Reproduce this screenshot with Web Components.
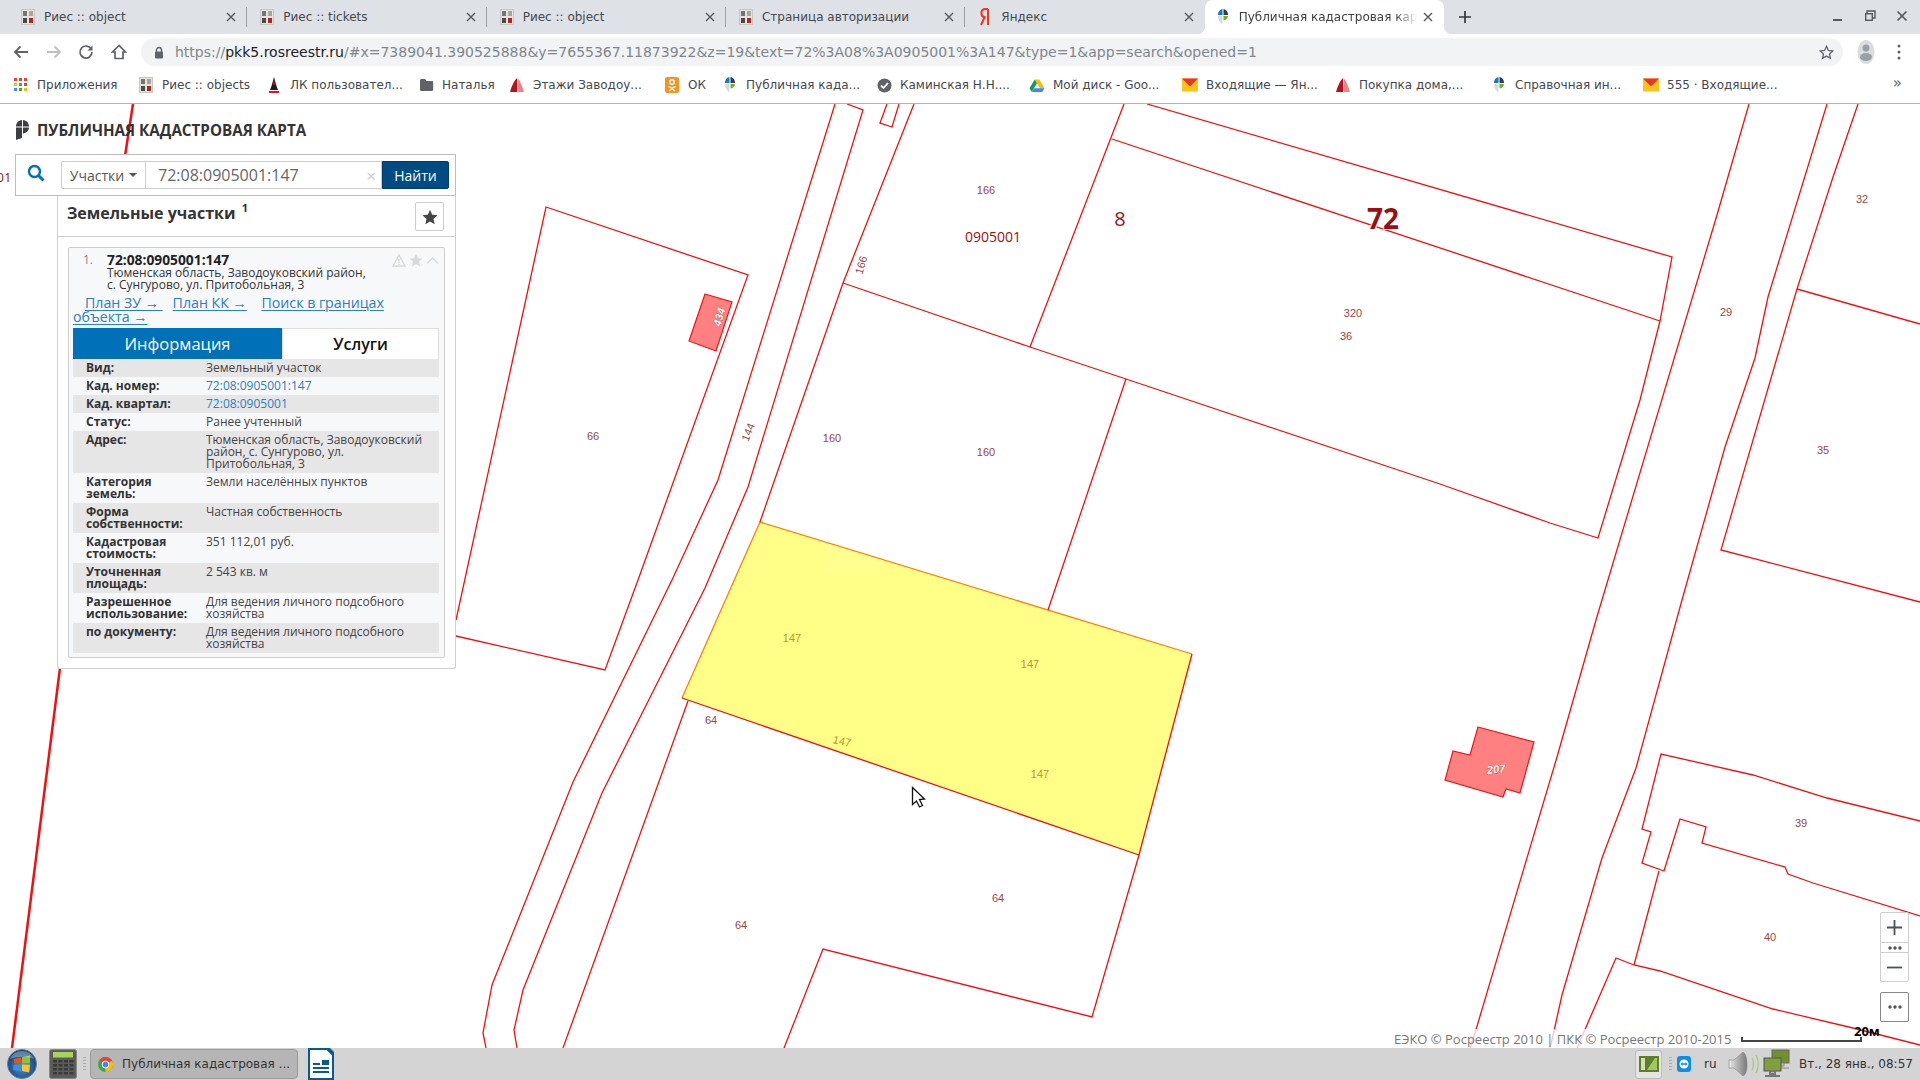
<!DOCTYPE html>
<html lang="ru">
<head>
<meta charset="utf-8">
<title>Публичная кадастровая карта</title>
<style>
    html, body { margin: 0; height: 100%; overflow: hidden; background: #fff; }
</style>
</head>
<body>
<pkk-desktop>
    <browser-tabs></browser-tabs>
    <browser-toolbar url="https://pkk5.rosreestr.ru/#x=7389041.390525888&amp;y=7655367.11873922&amp;z=19&amp;text=72%3A08%3A0905001%3A147&amp;type=1&amp;app=search&amp;opened=1"></browser-toolbar>
    <bookmark-bar></bookmark-bar>
    <map-view>
        <cadastre-canvas></cadastre-canvas>
        <pkk-sidebar></pkk-sidebar>
        <map-controls></map-controls>
        <map-footer></map-footer>
    </map-view>
    <desktop-taskbar></desktop-taskbar>
</pkk-desktop>

<script>
const ICONS = {
    riess: `<svg width="14" height="16" viewBox="0 0 14 16"><rect x="0.5" y="0.5" width="13" height="15" fill="#e6e3dc" stroke="#c9c6bf"/><rect x="2" y="2" width="4" height="5" fill="#77736e"/><rect x="8" y="2" width="4" height="5" fill="#a8a5a0"/><rect x="2" y="9" width="4" height="5" fill="#4a4a4a"/><rect x="8" y="9" width="4" height="5" fill="#a52a25"/></svg>`,
    yandex: `<svg width="14" height="18" viewBox="0 0 14 18"><path d="M10 1v16M10 1H7.5C4.8 1 3.4 2.8 3.4 5.2c0 2.300 1.300 3.700 3.300 4.100L3 17" fill="none" stroke="#f2341c" stroke-width="2"/></svg>`,
    pkk: `<svg width="12" height="18" viewBox="0 0 12 18"><path d="M5.500 1C2.500 1.500 1 4 1 7h4.500z" fill="#1a75bc"/><path d="M6.500 1C9.500 1.500 11 4 11 7H6.500z" fill="#2d3e50"/><path d="M6.500 8H11C10.800 10.500 9 12 6.500 12.500z" fill="#6ab42d"/><path d="M1 8h4.500v8C3 15 1 12 1 8z" fill="#d5dadd"/></svg>`,
    apps: `<svg width="14" height="14" viewBox="0 0 14 14"><g><rect x="0" y="0" width="3" height="3" fill="#ea4335"/><rect x="5" y="0" width="3" height="3" fill="#ea4335"/><rect x="10" y="0" width="3" height="3" fill="#ea4335"/><rect x="0" y="5" width="3" height="3" fill="#fbbc04"/><rect x="5" y="5" width="3" height="3" fill="#34a853"/><rect x="10" y="5" width="3" height="3" fill="#ea4335"/><rect x="0" y="10" width="3" height="3" fill="#4285f4"/><rect x="5" y="10" width="3" height="3" fill="#34a853"/><rect x="10" y="10" width="3" height="3" fill="#fbbc04"/></g></svg>`,
    lk: `<svg width="14" height="18" viewBox="0 0 14 18"><path d="M7 1l2.500 9 1.500 4H3l1.500-4z" fill="#1c1c1c"/><path d="M7 2l1 7H6z" fill="#c8141c"/><path d="M2 16h10" stroke="#d4181f" stroke-width="2"/></svg>`,
    folder: `<svg width="15" height="14" viewBox="0 0 15 14"><path d="M1 2.500C1 1.700 1.500 1 2.300 1H6l1.500 2h5.500c.8 0 1.200.6 1.200 1.300v7.500c0 .7-.5 1.200-1.200 1.200H2.300C1.500 13 1 12.500 1 11.800z" fill="#5f6368"/></svg>`,
    sail: `<svg width="16" height="16" viewBox="0 0 16 16"><path d="M8 1C5 4 2.500 9 1 15h7z" fill="#b5121b"/><path d="M8.500 1C11 4 13.500 9 15 15H8.500z" fill="#e5868b"/></svg>`,
    ok: `<svg width="16" height="18" viewBox="0 0 16 18"><rect x="1" y="1" width="14" height="16" rx="2" fill="#f7931e"/><circle cx="8" cy="6" r="2.300" fill="none" stroke="#fff" stroke-width="1.400"/><path d="M4.500 10.500c2 1.300 5 1.300 7 0M8 11.500v1.200M5.200 15L8 12.500l2.800 2.500" fill="none" stroke="#fff" stroke-width="1.400"/></svg>`,
    check: `<svg width="15" height="15" viewBox="0 0 15 15"><circle cx="7.500" cy="7.500" r="7" fill="#5f6368"/><path d="M4 7.500l2.500 2.500L11 5" fill="none" stroke="#fff" stroke-width="1.800"/></svg>`,
    drive: `<svg width="17" height="15" viewBox="0 0 17 15"><path d="M6 1h5l5.500 9.500H11.500z" fill="#fbbc04"/><path d="M6 1L.5 10.500 3 14.500 8.500 5z" fill="#0f9d58"/><path d="M3 14.500h11l2.500-4H5.500z" fill="#4285f4"/></svg>`,
    mail: `<svg width="16" height="14" viewBox="0 0 16 14"><rect x="0" y="0.500" width="16" height="13" fill="#fcc419"/><path d="M0 .5h16L8 8.500z" fill="#e8352a"/></svg>`,
    close: `<svg width="10" height="10" viewBox="0 0 10 10"><path d="M1 1l8 8M9 1l-8 8" stroke="#55585c" stroke-width="1.400"/></svg>`
};

class BrowserTab extends HTMLElement {
    constructor() {
        super();
        this.attachShadow({mode: 'open'});
        this.shadowRoot.innerHTML = `
            <style>
                :host {
                    display: flex;
                    align-items: center;
                    width: 239.33px;
                    height: 34px;
                    box-sizing: border-box;
                    padding: 0 0 1px 12px;
                    position: relative;
                    font: 12px "DejaVu Sans", sans-serif;
                    color: #45484d;
                }
                .ic { width: 16px; display: flex; justify-content: center; flex: none; }
                .tx {
                    margin-left: 8px;
                    flex: 1;
                    white-space: nowrap;
                    overflow: hidden;
                }
                .x { flex: none; width: 10px; margin: 0 11px 0 6px; display: flex; }
                :host(:not([active]):not([nosep]))::after {
                    content: '';
                    position: absolute;
                    right: 0;
                    top: 7px;
                    height: 20px;
                    width: 1px;
                    background: #9da1a6;
                }
                :host([active]) {
                    background: #fff;
                    border-radius: 8px 8px 0 0;
                    color: #3c4043;
                    padding-left: 10px;
                }
                :host([active])::before, :host([active])::after {
                    content: '';
                    position: absolute;
                    bottom: 0;
                    width: 8px;
                    height: 8px;
                }
                :host([active])::before {
                    left: -8px;
                    background: radial-gradient(circle at 0 0, transparent 8px, #fff 8.500px);
                }
                :host([active])::after {
                    right: -8px;
                    background: radial-gradient(circle at 100% 0, transparent 8px, #fff 8.500px);
                }
                :host([active]) .tx {
                    -webkit-mask-image: linear-gradient(90deg, #000 88%, transparent);
                }
            </style>
            <span class="ic">${ICONS[this.getAttribute('icon')]}</span>
            <span class="tx"><slot></slot></span>
            <span class="x">${ICONS.close}</span>
        `;
    }
}
customElements.define('browser-tab', BrowserTab);

class BrowserTabs extends HTMLElement {
    constructor() {
        super();
        this.attachShadow({mode: 'open'});
        this.shadowRoot.innerHTML = `
            <style>
                :host {
                    display: flex;
                    align-items: stretch;
                    height: 34px;
                    background: #dee1e6;
                    padding-left: 8px;
                }
                .plus { margin: 9px 0 0 13px; width: 16px; height: 16px; }
                .win { margin-left: auto; display: flex; align-items: center; gap: 20px; padding: 0 12px 2px 0; }
            </style>
            <browser-tab icon="riess">Риес :: object</browser-tab>
            <browser-tab icon="riess">Риес :: tickets</browser-tab>
            <browser-tab icon="riess">Риес :: object</browser-tab>
            <browser-tab icon="riess">Страница авторизации</browser-tab>
            <browser-tab icon="yandex" nosep>Яндекс</browser-tab>
            <browser-tab icon="pkk" active>Публичная кадастровая карта</browser-tab>
            <svg class="plus" viewBox="0 0 16 16"><path d="M8 2v12M2 8h12" stroke="#35383c" stroke-width="1.700"/></svg>
            <span class="win">
                <svg width="12" height="12" viewBox="0 0 12 12"><path d="M1 10h9" stroke="#55585c" stroke-width="2"/></svg>
                <svg width="12" height="12" viewBox="0 0 12 12"><path d="M3 3V1h8v7H9" fill="none" stroke="#55585c" stroke-width="1.400"/><rect x="1.700" y="3.700" width="6.600" height="6.600" fill="none" stroke="#55585c" stroke-width="1.400"/></svg>
                <svg width="12" height="12" viewBox="0 0 12 12"><path d="M1.500 1.500l9 9M10.500 1.500l-9 9" stroke="#55585c" stroke-width="1.700"/></svg>
            </span>
        `;
    }
}
customElements.define('browser-tabs', BrowserTabs);

class BrowserToolbar extends HTMLElement {
    constructor() {
        super();
        this.attachShadow({mode: 'open'});
        const url = this.getAttribute('url');
        const host = 'pkk5.rosreestr.ru';
        const rest = url.slice(url.indexOf(host) + host.length);
        this.shadowRoot.innerHTML = `
            <style>
                :host {
                    display: flex;
                    align-items: center;
                    height: 30px;
                    padding: 3px 0 0 5px;
                    background: #fff;
                    font: 14px "DejaVu Sans", sans-serif;
                }
                .btn { width: 32.500px; display: flex; justify-content: center; align-items: center; }
                .url {
                    width: 1702px;
                    height: 28px;
                    margin: 0 0 0 6px;
                    background: #f1f3f4;
                    border-radius: 14px;
                    display: flex;
                    align-items: center;
                    box-sizing: border-box;
                    padding: 0 9px 0 13px;
                    color: #80868b;
                }
                .url b { font-weight: 400; color: #202124; }
                .txt { margin-left: 11px; flex: 1; white-space: nowrap; }
                .side { display: flex; align-items: center; margin-left: 14px; gap: 22px; }
            </style>
            <span class="btn"><svg width="16" height="14" viewBox="0 0 16 14"><path d="M15 7H2M7.500 1.500L2 7l5.500 5.500" fill="none" stroke="#5f6368" stroke-width="1.800"/></svg></span>
            <span class="btn"><svg width="16" height="14" viewBox="0 0 16 14"><path d="M1 7h13M8.500 1.500L14 7l-5.500 5.500" fill="none" stroke="#bdc0c4" stroke-width="1.800"/></svg></span>
            <span class="btn"><svg width="16" height="16" viewBox="0 0 16 16"><path d="M13.300 5.200A6 6 0 1 0 14 8" fill="none" stroke="#5f6368" stroke-width="1.700"/><path d="M14.500 1.500v5h-5z" fill="#5f6368"/></svg></span>
            <span class="btn"><svg width="16" height="16" viewBox="0 0 16 16"><path d="M8 1.500L1.500 8H4v6.500h8V8h2.500z" fill="none" stroke="#5f6368" stroke-width="1.700"/></svg></span>
            <span class="url">
                <svg width="10" height="13" viewBox="0 0 10 13"><path d="M2.500 6V4a2.500 2.500 0 0 1 5 0v2" fill="none" stroke="#5f6368" stroke-width="1.400"/><rect x="1" y="5.500" width="8" height="7" rx="1" fill="#5f6368"/></svg>
                <span class="txt">https://<b>${host}</b>${rest}</span>
                <svg width="15" height="15" viewBox="0 0 15 15"><path d="M7.500 1.300l1.900 4.100 4.400.5-3.300 3 .9 4.400-3.900-2.200-3.900 2.200.9-4.400-3.300-3 4.400-.5z" fill="none" stroke="#5f6368" stroke-width="1.300"/></svg>
            </span>
            <span class="side">
                <svg width="18" height="24" viewBox="0 0 18 24"><ellipse cx="9" cy="12" rx="8.500" ry="12" fill="#dadce0"/><circle cx="9" cy="8" r="3.500" fill="#9aa0a6"/><ellipse cx="9" cy="17" rx="6" ry="4" fill="#9aa0a6"/></svg>
                <svg width="4" height="16" viewBox="0 0 4 16"><circle cx="2" cy="2" r="1.500" fill="#5f6368"/><circle cx="2" cy="8" r="1.500" fill="#5f6368"/><circle cx="2" cy="14" r="1.500" fill="#5f6368"/></svg>
            </span>
        `;
    }
}
customElements.define('browser-toolbar', BrowserToolbar);

class BookmarkItem extends HTMLElement {
    constructor() {
        super();
        this.attachShadow({mode: 'open'});
        this.shadowRoot.innerHTML = `
            <style>
                :host {
                    display: flex;
                    align-items: center;
                    flex: none;
                    font: 12px "DejaVu Sans", sans-serif;
                    color: #45484d;
                    white-space: nowrap;
                    box-sizing: border-box;
                }
                .ic { width: 16px; margin-right: 8px; display: flex; justify-content: center; flex: none; }
            </style>
            <span class="ic">${ICONS[this.getAttribute('icon')]}</span><slot></slot>
        `;
        this.style.width = this.getAttribute('w') + 'px';
    }
}
customElements.define('bookmark-item', BookmarkItem);

class BookmarkBar extends HTMLElement {
    constructor() {
        super();
        this.attachShadow({mode: 'open'});
        const items = [
            ['apps', 125, 'Приложения'], ['riess', 128, 'Риес :: objects'], ['lk', 152, 'ЛК пользовател...'],
            ['folder', 91, 'Наталья'], ['sail', 155, 'Этажи Заводоу...'], ['ok', 58, 'ОК'],
            ['pkk', 154, 'Публичная када...'], ['check', 153, 'Каминская Н.Н....'], ['drive', 153, 'Мой диск - Goo...'],
            ['mail', 153, 'Входящие — Ян...'], ['sail', 156, 'Покупка дома,...'], ['pkk', 152, 'Справочная ин...'],
            ['mail', 240, '555 · Входящие...']
        ];
        this.shadowRoot.innerHTML = `
            <style>
                :host {
                    display: flex;
                    height: 36px;
                    background: #fff;
                    padding-left: 13px;
                    border-bottom: 1px solid #b4b4b4;
                    position: relative;
                }
                .more {
                    position: absolute;
                    right: 18px;
                    top: 7px;
                    font: 15px "DejaVu Sans", sans-serif;
                    color: #5f6368;
                }
            </style>
            ${items.map(i => `<bookmark-item icon="${i[0]}" w="${i[1]}">${i[2]}</bookmark-item>`).join('')}
            <span class="more">»</span>
        `;
    }
}
customElements.define('bookmark-bar', BookmarkBar);

class MapView extends HTMLElement {
    constructor() {
        super();
        this.attachShadow({mode: 'open'});
        this.shadowRoot.innerHTML = `
            <style>
                :host {
                    display: block;
                    position: relative;
                    height: 944px;
                    background: #fff;
                    overflow: hidden;
                }
            </style>
            <slot></slot>
        `;
    }
}
customElements.define('map-view', MapView);

class CadastreCanvas extends HTMLElement {
    constructor() {
        super();
        this.attachShadow({mode: 'open'});
        const lines = [
            // parcel 66
            '456,620 546,207 748,275 638,580 605,670 456,636',
            // road strip by 144
            '835,104 718,480 672,580 573,782 492,985 483,1033 486,1048',
            '847,104 863,110 748,487 705,588 602,793 523,990 514,1030 517,1048',
            '914,104 843,283 760,522',
            '899,104 892,127 880,123 887,104',
            '688,701 563,1048',
            // 160 / 166 / 320
            '843,283 1030,347 1126,379 1440,484 1550,523 1598,538 1640,400 1660,321 1672,257 1147,104',
            '1112,139 1660,321',
            '1124,104 1030,347',
            '1126,379 1048,610',
            // 64
            '1139,855 1092,1017 823,949 784,1048',
            // road 29
            '1749,104 1717,215 1596,620 1557,757 1475,1033 1470,1048',
            '1827,104 1768,297 1755,358 1725,447 1682,600 1636,768 1602,858 1562,995 1552,1040 1550,1048',
            '1858,104 1833,177 1797,289 1721,550 1920,602',
            '1797,289 1920,324',
            // 39 / 40
            '1920,821 1827,798 1753,775 1661,754 1642,829 1651,832 1642,863 1664,871 1680,819 1706,827 1702,843 1785,867 1788,874 1813,883 1920,916',
            '1659,871 1634,965',
            '1577,1048 1616,958 1634,965 1660,971 1773,1009 1853,1028 1920,1045'
        ];
        const labels = [
            [593, 436, '66'], [832, 438, '160'], [986, 190, '166'], [986, 452, '160'], [1353, 313, '320'], [1346, 336, '36'],
            [1862, 199, '32'], [1726, 312, '29'], [1823, 450, '35'], [711, 720, '64'], [741, 925, '64'], [998, 898, '64'],
            [1801, 823, '39'], [1770, 937, '40']
        ];
        const yellow = [[792, 638], [1030, 664], [1040, 774]];
        this.shadowRoot.innerHTML = `
            <style>
                :host { position: absolute; inset: 0; display: block; }
                svg { display: block; }
                polyline { fill: none; stroke: #f01010; stroke-width: 1.300; }
                text { font: 11px "Liberation Sans", sans-serif; fill: #9a4448; text-anchor: middle; dominant-baseline: central; }
                text.y { fill: #c8932e; }
                text.big { font: 14px "Open Sans", sans-serif; fill: #9a1010; }
                text.house { font: italic 700 11px "Liberation Sans", sans-serif; fill: #fff; stroke: #a03030; stroke-width: .6px; paint-order: stroke; }
            </style>
            <svg width="1920" height="944" viewBox="0 104 1920 944">
                <polygon points="760,522 1192,654 1139,855 682,698" fill="#ffff88"/>
                <rect x="825" y="522" width="55" height="51" fill="#fff" opacity=".07"/>
                <path d="M682,698 L760,522 L1192,654" fill="none" stroke="#ff7f10" stroke-width="1.300"/>
                <path d="M1192,654 L1139,855 L682,698" fill="none" stroke="#f01010" stroke-width="1.300"/>
                ${lines.map(l => `<polyline points="${l}"/>`).join('')}
                <path d="M60,668 L12,1048" stroke="#f01010" stroke-width="2.500"/>
                <path d="M133,104 L125,156" stroke="#f01010" stroke-width="2.500"/>
                <polygon points="705,294 732,302 716,351 689,341" fill="#ff8080" stroke="#e81818" stroke-width="1.200"/>
                <polygon points="1478,727 1534,742 1520,793 1506,789 1503,797 1445,780 1453,751 1470,755" fill="#ff8080" stroke="#e81818" stroke-width="1.200"/>
                ${labels.map(l => `<text x="${l[0]}" y="${l[1]}">${l[2]}</text>`).join('')}
                ${yellow.map(l => `<text class="y" x="${l[0]}" y="${l[1]}">147</text>`).join('')}
                <text class="y" transform="translate(842 741) rotate(12)">147</text>
                <text transform="translate(748 432) rotate(-68)">144</text>
                <text transform="translate(861 265) rotate(-74)">166</text>
                <text class="house" transform="translate(719 317) rotate(-75)">434</text>
                <text class="house" transform="translate(1496 769) rotate(-6)">207</text>
                <text class="big" x="993" y="236">0905001</text>
                <text x="1120" y="218" style="font: 20px 'Open Sans', sans-serif; fill: #9a1010">8</text>
                <text x="1383" y="218" style="font: 700 28px 'Open Sans', sans-serif; fill: #9a1010; stroke: #fff; stroke-width: 2px; paint-order: stroke">72</text>
                <text x="4" y="177" style="font: 13px 'Open Sans', sans-serif; fill: #9a1010">01</text>
                <path d="M912.500,787.500 L912.500,804.500 L916.500,801 L919.500,807 L922.500,805.500 L919.500,799.500 L924.500,799 Z" fill="#fff" stroke="#111" stroke-width="1.300"/>
            </svg>
        `;
    }
}
customElements.define('cadastre-canvas', CadastreCanvas);

class PkkSidebar extends HTMLElement {
    constructor() {
        super();
        this.attachShadow({mode: 'open'});
        this.shadowRoot.innerHTML = `
            <style>
                :host {
                    display: block;
                    position: absolute;
                    left: 15px;
                    top: 15px;
                    width: 441px;
                    font-family: "Open Sans", sans-serif;
                }
                .title {
                    display: flex;
                    align-items: center;
                    height: 24px;
                    margin: -1px 0 12px 1px;
                    gap: 8px;
                    font-size: 15.200px;
                    font-weight: 700;
                    color: #333;
                    white-space: nowrap;
                }
            </style>
            <div class="title">
                <svg width="13" height="20" viewBox="0 0 13 20"><path d="M6 0C2.500 .3 0 3 0 6.500h6zM7 0c3.500.3 6 3 6 6.500H7zM7 7.500h6c0 3-2.500 5.500-6 6zM0 7.500h6V18l-6 2z" fill="#3b3f44"/></svg>
                ПУБЛИЧНАЯ КАДАСТРОВАЯ КАРТА
            </div>
            <search-bar></search-bar>
            <result-panel></result-panel>
        `;
    }
}
customElements.define('pkk-sidebar', PkkSidebar);

class SearchBar extends HTMLElement {
    constructor() {
        super();
        this.attachShadow({mode: 'open'});
        this.shadowRoot.innerHTML = `
            <style>
                :host {
                    display: flex;
                    align-items: center;
                    height: 42px;
                    box-sizing: border-box;
                    background: #fff;
                    border: 1px solid #bdbdbd;
                    padding-right: 6px;
                    font-size: 14px;
                }
                .loupe { width: 45px; box-sizing: border-box; padding-right: 6px; display: flex; justify-content: center; flex: none; margin-top: -4px; }
                .kind {
                    width: 85px;
                    height: 28px;
                    box-sizing: border-box;
                    border: 1px solid #ccc;
                    border-radius: 2px 0 0 2px;
                    display: flex;
                    align-items: center;
                    justify-content: center;
                    gap: 5px;
                    color: #555;
                    flex: none;
                }
                .kind i { border: 4px solid transparent; border-top-color: #555; border-bottom: 0; width: 0; height: 0; }
                .query {
                    flex: 1;
                    height: 28px;
                    box-sizing: border-box;
                    border: 1px solid #ccc;
                    border-left: 0;
                    display: flex;
                    align-items: center;
                    justify-content: space-between;
                    padding: 0 5px 0 12px;
                    font-size: 16px;
                    color: #666;
                }
                .query span { color: #ccc; font-size: 17px; }
                .go {
                    width: 67px;
                    height: 28px;
                    background: #004b82;
                    border: 1px solid #003c68;
                    border-radius: 0 2px 2px 0;
                    box-sizing: border-box;
                    color: #fff;
                    display: flex;
                    align-items: center;
                    justify-content: center;
                    flex: none;
                }
            </style>
            <span class="loupe"><svg width="18" height="18" viewBox="0 0 18 18"><circle cx="7.500" cy="7.500" r="5.500" fill="none" stroke="#0070b9" stroke-width="2.400"/><path d="M11.500 11.500l5 5" stroke="#0070b9" stroke-width="3"/></svg></span>
            <span class="kind">Участки <i></i></span>
            <span class="query">72:08:0905001:147<span>×</span></span>
            <span class="go">Найти</span>
        `;
    }
}
customElements.define('search-bar', SearchBar);

class ResultPanel extends HTMLElement {
    constructor() {
        super();
        this.attachShadow({mode: 'open'});
        this.shadowRoot.innerHTML = `
            <style>
                :host {
                    display: block;
                    margin-left: 42px;
                    background: #fff;
                    border: 1px solid #cfcfcf;
                    border-top: 0;
                    border-radius: 0 0 3px 3px;
                    padding-bottom: 10px;
                }
                header {
                    display: flex;
                    align-items: flex-start;
                    justify-content: space-between;
                    height: 41px;
                    box-sizing: border-box;
                    border-bottom: 1px solid #cfcfcf;
                    padding: 6px 11px 0 9px;
                    margin-bottom: 10px;
                }
                h2 { margin: 0; font-size: 16px; font-weight: 700; color: #333; line-height: 22px; }
                sup { font-size: 11px; line-height: 0; vertical-align: 7px; margin-left: 2px; }
                .fav {
                    width: 29px;
                    height: 29px;
                    box-sizing: border-box;
                    border: 1px solid #ccc;
                    border-radius: 2px;
                    display: flex;
                    align-items: center;
                    justify-content: center;
                }
            </style>
            <header>
                <h2>Земельные участки <sup>1</sup></h2>
                <span class="fav"><svg width="16" height="16" viewBox="0 0 16 16"><path d="M8 .8l2.200 5 5.300.5-4 3.600 1.200 5.300L8 12.400l-4.700 2.800 1.200-5.300-4-3.600 5.300-.5z" fill="#444"/></svg></span>
            </header>
            <parcel-card></parcel-card>
        `;
    }
}
customElements.define('result-panel', ResultPanel);

class ParcelCard extends HTMLElement {
    constructor() {
        super();
        this.attachShadow({mode: 'open'});
        this.shadowRoot.innerHTML = `
            <style>
                :host {
                    display: block;
                    margin: 0 10px;
                    box-sizing: border-box;
                    background: #f7f8fa;
                    border: 1px solid #cdcdcd;
                    border-radius: 2px;
                    padding: 5px 5px 4px 4px;
                    position: relative;
                }
                .head { display: flex; line-height: 12px; font-size: 12px; color: #333; }
                .num { width: 34px; padding-left: 10px; box-sizing: border-box; color: #888; line-height: 14px; }
                .no { font-size: 13.800px; font-weight: 700; line-height: 14px; color: #222; }
                .acts { position: absolute; right: 5px; top: 6px; display: flex; gap: 3px; align-items: center; }
                .links { margin-top: 5px; font-size: 14.200px; line-height: 14px; text-indent: 12px; }
                a { color: #2a7fc1; text-decoration: underline; text-underline-offset: 2px; margin-right: 10px; }
                a.k { margin-right: 11px; }
                .tabs { display: flex; height: 31px; margin-top: 4px; font-size: 16.500px; }
                .tabs div { display: flex; align-items: center; justify-content: center; box-sizing: border-box; }
                .on { width: 209px; background: #0070b9; color: #fff; }
                .off { flex: 1; background: #fff; color: #111; border: 1px solid #ddd; border-bottom: 0; font-weight: 600; font-size: 16px; }
            </style>
            <div class="head">
                <span class="num">1.</span>
                <span>
                    <span class="no">72:08:0905001:147</span><br>
                    Тюменская область, Заводоуковский район,<br>
                    с. Сунгурово, ул. Притобольная, 3
                </span>
            </div>
            <span class="acts">
                <svg width="14" height="13" viewBox="0 0 14 13"><path d="M7 1l6 11H1z" fill="none" stroke="#d9d9d9" stroke-width="1.500"/><path d="M7 5v4M7 10v1" stroke="#d9d9d9" stroke-width="1.500"/></svg>
                <svg width="14" height="13" viewBox="0 0 14 13"><path d="M7 0l1.900 4.300 4.600.4-3.500 3.100 1.100 4.600L7 10 2.900 12.400 4 7.800.5 4.700l4.600-.4z" fill="#d9d9d9"/></svg>
                <svg width="13" height="9" viewBox="0 0 13 9"><path d="M1 7.500l5.500-5.500L12 7.500" fill="none" stroke="#d9d9d9" stroke-width="1.500"/></svg>
            </span>
            <div class="links"><a>План ЗУ → </a> <a class="k">План КК →</a> <a>Поиск в границах объекта →</a></div>
            <div class="tabs"><div class="on">Информация</div><div class="off">Услуги</div></div>
            <info-row label="Вид:">Земельный участок</info-row>
            <info-row label="Кад. номер:" link>72:08:0905001:147</info-row>
            <info-row label="Кад. квартал:" link>72:08:0905001</info-row>
            <info-row label="Статус:">Ранее учтенный</info-row>
            <info-row label="Адрес:">Тюменская область, Заводоуковский район, с. Сунгурово, ул. Притобольная, 3</info-row>
            <info-row label="Категория земель:">Земли населённых пунктов</info-row>
            <info-row label="Форма собственности:">Частная собственность</info-row>
            <info-row label="Кадастровая стоимость:">351 112,01 руб.</info-row>
            <info-row label="Уточненная площадь:">2 543 кв. м</info-row>
            <info-row label="Разрешенное использование:">Для ведения личного подсобного хозяйства</info-row>
            <info-row label="по документу:">Для ведения личного подсобного хозяйства</info-row>
        `;
        const rows = this.shadowRoot.querySelectorAll('info-row');
        rows.forEach((r, i) => { if (i % 2 === 0) r.setAttribute('shade', ''); });
    }
}
customElements.define('parcel-card', ParcelCard);

class InfoRow extends HTMLElement {
    constructor() {
        super();
        this.attachShadow({mode: 'open'});
        this.shadowRoot.innerHTML = `
            <style>
                :host {
                    display: grid;
                    grid-template-columns: 120px 1fr;
                    padding: 3px 8px 3px 13px;
                    font-size: 12px;
                    line-height: 12px;
                    color: #444;
                }
                :host([shade]) { background: #e6e6e6; }
                :host([link]) .v { color: #2a7fc1; }
                .k { font-weight: 700; color: #333; padding-right: 8px; }
            </style>
            <span class="k">${this.getAttribute('label')}</span>
            <span class="v"><slot></slot></span>
        `;
    }
}
customElements.define('info-row', InfoRow);

class MapControls extends HTMLElement {
    constructor() {
        super();
        this.attachShadow({mode: 'open'});
        const dots = `<svg width="14" height="4" viewBox="0 0 14 4"><circle cx="2" cy="2" r="1.700" fill="#555"/><circle cx="7" cy="2" r="1.700" fill="#555"/><circle cx="12" cy="2" r="1.700" fill="#555"/></svg>`;
        this.shadowRoot.innerHTML = `
            <style>
                :host {
                    display: flex;
                    flex-direction: column;
                    gap: 10px;
                    position: absolute;
                    left: 1880px;
                    top: 808px;
                    width: 29px;
                }
                .g { background: #fff; border: 1px solid #cfcfcf; border-radius: 2px; box-sizing: border-box; }
                .g div { display: flex; align-items: center; justify-content: center; }
                .p { height: 29px; }
                .d { height: 11px; border-top: 1px solid #cfcfcf; border-bottom: 1px solid #cfcfcf; box-sizing: border-box; }
                .m { height: 28px; }
                .more { height: 30px; border-color: #888; display: flex; align-items: center; justify-content: center; }
            </style>
            <div class="g">
                <div class="p"><svg width="15" height="15" viewBox="0 0 15 15"><path d="M7.500 0v15M0 7.500h15" stroke="#4b5159" stroke-width="1.800"/></svg></div>
                <div class="d">${dots}</div>
                <div class="m"><svg width="15" height="3" viewBox="0 0 15 3"><path d="M0 1.500h15" stroke="#4b5159" stroke-width="1.800"/></svg></div>
            </div>
            <div class="g more">${dots}</div>
        `;
    }
}
customElements.define('map-controls', MapControls);

class MapFooter extends HTMLElement {
    constructor() {
        super();
        this.attachShadow({mode: 'open'});
        this.shadowRoot.innerHTML = `
            <style>
                :host {
                    display: flex;
                    align-items: center;
                    position: absolute;
                    left: 1394px;
                    top: 925px;
                    height: 19px;
                    font: 13px "Open Sans", sans-serif;
                    color: #777;
                    white-space: nowrap;
                    background: rgba(255, 255, 255, .75);
                }
                .scale {
                    position: absolute;
                    left: 347px;
                    top: 8px;
                    width: 121px;
                    height: 5px;
                    box-sizing: border-box;
                    border: 2px solid #444;
                    border-top: 0;
                }
                .mark {
                    position: absolute;
                    left: 460px;
                    top: -7px;
                    font-weight: 700;
                    font-size: 13px;
                    color: #000;
                }
            </style>
            ЕЭКО © Росреестр 2010 | ПКК © Росреестр 2010-2015
            <span class="scale"></span>
            <span class="mark">20м</span>
        `;
    }
}
customElements.define('map-footer', MapFooter);

class DesktopTaskbar extends HTMLElement {
    constructor() {
        super();
        this.attachShadow({mode: 'open'});
        let keys = '';
        for (let r = 0; r < 4; r++) {
            for (let c = 0; c < 4; c++) {
                keys += `<rect x="${4 + c * 5.500}" y="${11 + r * 4}" width="4" height="2.500" fill="#3a3a3a"/>`;
            }
        }
        this.shadowRoot.innerHTML = `
            <style>
                :host {
                    display: flex;
                    align-items: center;
                    height: 32px;
                    background: #d4d4d4;
                    font: 12px "DejaVu Sans", sans-serif;
                    color: #333;
                    position: relative;
                }
                svg { display: block; flex: none; }
                .orb { margin-left: 7px; }
                .calc { margin-left: 12px; }
                .grip { width: 3px; height: 14px; margin: 0 4px 0 6px; flex: none; background: repeating-linear-gradient(#aaa 0 1px, transparent 1px 3px); }
                .task {
                    width: 208px;
                    height: 30px;
                    box-sizing: border-box;
                    background: #b5b5b5;
                    border: 1px solid #9a9a9a;
                    border-radius: 4px;
                    display: flex;
                    align-items: center;
                    gap: 9px;
                    padding-left: 7px;
                    white-space: nowrap;
                    flex: none;
                }
                .doc { margin-left: 10px; }
                .tray { margin-left: auto; display: flex; align-items: center; }
                .app {
                    width: 27px;
                    height: 29px;
                    box-sizing: border-box;
                    background: #e4e4e4;
                    border: 1px solid #bcbcbc;
                    border-radius: 3px;
                    display: flex;
                    align-items: center;
                    justify-content: center;
                }
                .ru { width: 12px; margin: 0 12px 0 13px; }
                .clock { width: 116px; margin: 0 5px 0 9px; white-space: nowrap; }
            </style>
            <svg class="orb" width="30" height="30" viewBox="0 0 30 30">
                <defs><radialGradient id="o" cx="50%" cy="60%" r="60%"><stop offset="0" stop-color="#4a8fd0"/><stop offset="1" stop-color="#103c70"/></radialGradient></defs>
                <circle cx="15" cy="15" r="14.500" fill="url(#o)" stroke="#6a7b8c"/>
                <path d="M7 10l7-1.500v6H7z" fill="#e8521f"/><path d="M15 8.200l8-1.700v8H15z" fill="#8fc03c"/>
                <path d="M6.500 15.500H14v7l-8-1.500z" fill="#3b8fe0"/><path d="M15 15.500h8l-.8 8L15 22z" fill="#fcc42c"/>
                <path d="M3 10a13 13 0 0 1 24 0c-7-3-17-3-24 0z" fill="#fff" opacity=".3"/>
            </svg>
            <svg class="calc" width="28" height="30" viewBox="0 0 28 30">
                <rect x="0.500" y="0.500" width="27" height="29" rx="2" fill="#5c5c58" stroke="#888"/>
                <rect x="4" y="3" width="20" height="5.500" fill="#a4d65e"/>
                ${keys}
            </svg>
            <span class="grip"></span>
            <div class="task">
                <svg width="15" height="15" viewBox="0 0 15 15">
                    <circle cx="7.500" cy="7.500" r="7.500" fill="#34a853"/>
                    <path d="M1 3.750A7.500 7.500 0 0 1 14 3.750L7.500 7.500z" fill="#ea4335"/>
                    <path d="M14 3.750A7.500 7.500 0 0 1 7.500 15L7.500 7.500z" fill="#fbbc04"/>
                    <circle cx="7.500" cy="7.500" r="3.700" fill="#fff"/><circle cx="7.500" cy="7.500" r="2.800" fill="#4285f4"/>
                </svg>
                Публичная кадастровая ...
            </div>
            <svg class="doc" width="26" height="32" viewBox="0 0 26 32">
                <path d="M1 1h18l6 6v24H1z" fill="#fff" stroke="#0a5a8a" stroke-width="2"/>
                <path d="M18 0h4l4 4v4z" fill="#0a5a8a"/>
                <path d="M5 16h7M5 20h16M5 24h16" stroke="#0a5a8a" stroke-width="2"/>
                <rect x="14" y="12" width="7" height="5" fill="#0a5a8a"/>
            </svg>
            <div class="tray">
                <span class="app"><svg width="20" height="16" viewBox="0 0 20 16"><rect width="20" height="16" fill="#5f7f30"/><rect x="2" y="2" width="4" height="12" fill="#cfe0a8"/><path d="M8 14l8-12h2v12z" fill="#a4c85c"/></svg></span>
                <span class="grip" style="margin-left:7px;margin-right:5px"></span>
                <svg width="14" height="16" viewBox="0 0 14 16"><rect width="14" height="16" rx="3" fill="#0e8ee9"/><circle cx="7" cy="8" r="4.500" fill="#fff"/><path d="M3.500 8l2-2v1.200h3V6l2 2-2 2V8.800h-3V10z" fill="#0e8ee9"/></svg>
                <span class="ru">ru</span>
                <svg width="32" height="26" viewBox="0 0 32 26">
                    <defs><linearGradient id="s" x1="0" x2="1"><stop offset="0" stop-color="#e8e8e8"/><stop offset="1" stop-color="#777"/></linearGradient></defs>
                    <path d="M1 9h5L15 1c5 2 6 22 0 24L6 17H1z" fill="url(#s)" stroke="#888" stroke-width=".6"/>
                    <path d="M24 7c2 4 2 8 0 12M28 4c3 6 3 12 0 18" fill="none" stroke="#a4c86c" stroke-width="1.200"/>
                </svg>
                <svg width="27" height="30" viewBox="0 0 27 30" style="margin-left:3px">
                    <rect x="9" y="1" width="17" height="13" fill="#6f9030" stroke="#666"/>
                    <path d="M14 14h7v3H14zM11 19h15" stroke="#888" fill="#bbb"/>
                    <rect x="1" y="9" width="17" height="13" fill="#7fa03c" stroke="#555"/>
                    <path d="M7 22h5v3H7zM2 27h15" stroke="#777" stroke-width="2" fill="#bbb"/>
                </svg>
                <span class="clock">Вт., 28 янв., 08:57</span>
            </div>
        `;
    }
}
customElements.define('desktop-taskbar', DesktopTaskbar);

class PkkDesktop extends HTMLElement {
    constructor() {
        super();
        this.attachShadow({mode: 'open'});
        this.shadowRoot.innerHTML = `
            <style>
                :host { display: flex; flex-direction: column; width: 1920px; height: 1080px; overflow: hidden; }
            </style>
            <slot></slot>
        `;
    }
}
customElements.define('pkk-desktop', PkkDesktop);
</script>
</body>
</html>
